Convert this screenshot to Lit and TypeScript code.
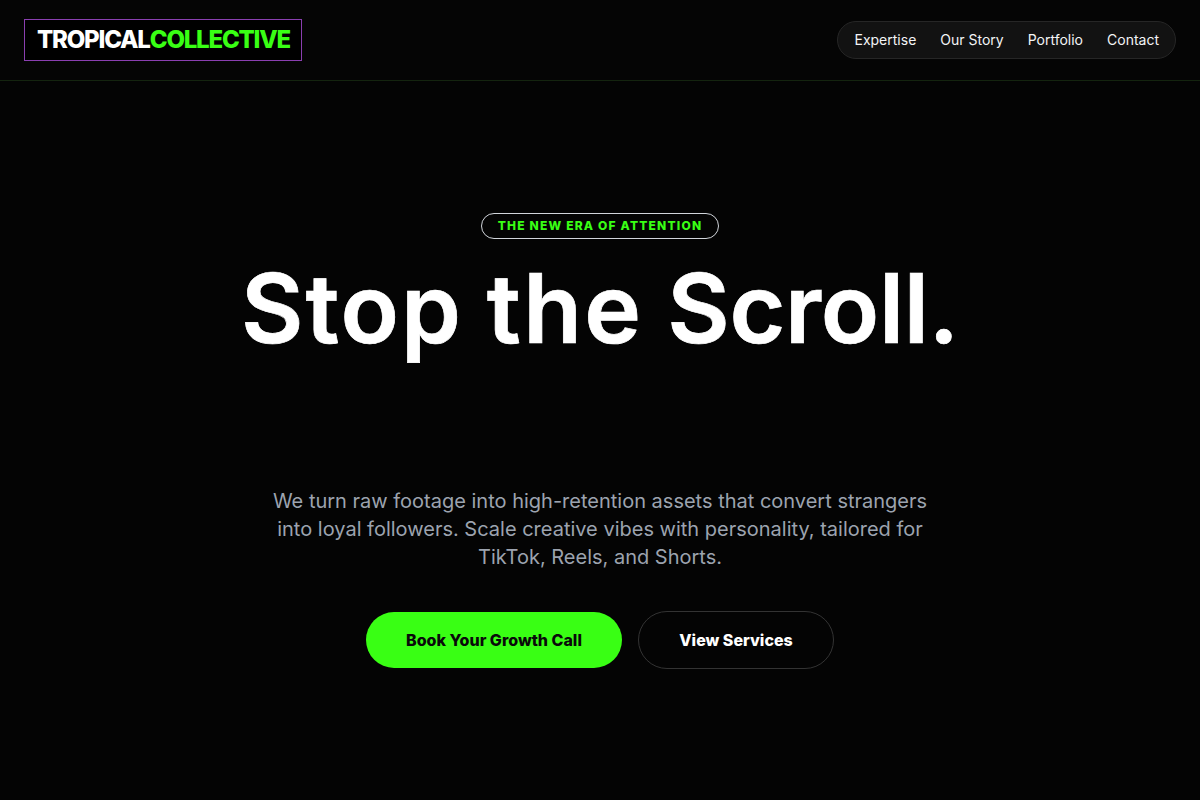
import { LitElement, html, css } from "lit";
import { customElement } from "lit/decorators.js";

@customElement("app-root")
export class AppRoot extends LitElement {
  static styles = css`
    :host { display: block; min-height: 800px; background: #040404; font-family: Inter, "Liberation Sans", sans-serif; color: #fff; }
    .header { display: flex; align-items: center; justify-content: space-between; height: 80px; padding: 0 24px; box-sizing: content-box; border-bottom: 1px solid #14240f; background: #050505; }
    .logo { display: flex; border: 1px solid #8a3fb0; background: #000; padding: 0 11px 0 12px; height: 42px; margin-top: -1px; box-sizing: border-box; align-items: center; font-size: 24px; font-weight: 800; letter-spacing: -1.2px; }
    .green { color: #39ff14; }
    .nav { display: flex; gap: 24px; padding: 0 16px; height: 38px; box-sizing: border-box; align-items: center; border: 1px solid #262626; border-radius: 19px; background: #121212; font-size: 14px; font-weight: 400; color: #f3f4f6; line-height: 20px; }
    .nav span { margin-top: -1px; }
    .hero { display: flex; flex-direction: column; align-items: center; padding-top: 132px; }
    .badge { height: 26px; box-sizing: border-box; display: flex; align-items: center; padding: 0 16px 2px; border: 1px solid #d1d5db; border-radius: 13px; color: #39ff14; font-size: 12px; font-weight: 800; letter-spacing: 1.2px; }
    h1 { display: flex; gap: 24px; margin: 21px 0 0; font-size: 96px; line-height: 96px; font-weight: 600; -webkit-text-stroke: 0.7px #fff; }
    .w1 { letter-spacing: 2px; }
    .w2 { letter-spacing: 2.3px; }
    .w3 { letter-spacing: -0.3px; }
    p { margin: 131px 0 0; width: 672px; text-align: center; font-size: 20px; line-height: 28px; color: #9ca3af; }
    .actions { display: flex; gap: 16px; margin-top: 40px; align-items: center; }
    .btn { height: 56px; display: flex; align-items: center; justify-content: center; box-sizing: border-box; border-radius: 28px; font-size: 16px; font-weight: 800; }
    .primary { width: 256px; background: #39ff14; color: #0a0a0a; }
    .secondary { width: 196px; height: 58px; border-radius: 29px; border: 1px solid #333; color: #fff; }
  `;
  render() {
    return html`
      <header class="header">
        <div class="logo"><span>TROPICAL</span><span class="green">COLLECTIVE</span></div>
        <nav class="nav"><span>Expertise</span><span>Our Story</span><span>Portfolio</span><span>Contact</span></nav>
      </header>
      <main class="hero">
        <div class="badge">THE NEW ERA OF ATTENTION</div>
        <h1><span class="w1">Stop</span><span class="w2">the</span><span class="w3">Scroll.</span></h1>
        <p>We turn raw footage into high-retention assets that convert strangers into loyal followers. Scale creative vibes with personality, tailored for TikTok, Reels, and Shorts.</p>
        <div class="actions"><div class="btn primary">Book Your Growth Call</div><div class="btn secondary">View Services</div></div>
      </main>
    `;
  }
}
